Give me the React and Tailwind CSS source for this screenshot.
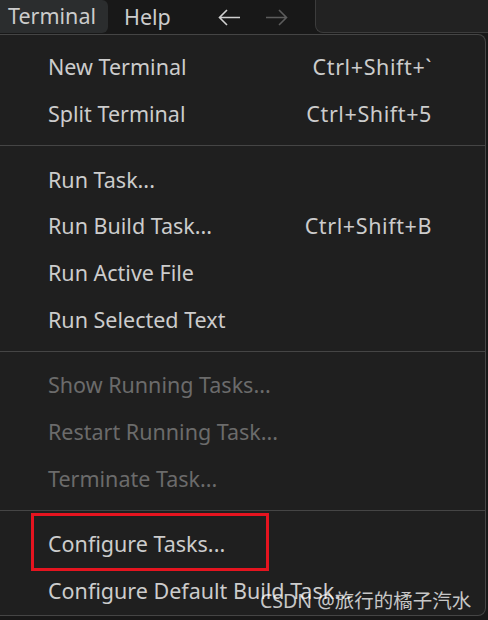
import React from 'react';

const groups = [
  [
    { label: 'New Terminal', keys: 'Ctrl+Shift+`' },
    { label: 'Split Terminal', keys: 'Ctrl+Shift+5' },
  ],
  [
    { label: 'Run Task...' },
    { label: 'Run Build Task...', keys: 'Ctrl+Shift+B' },
    { label: 'Run Active File' },
    { label: 'Run Selected Text' },
  ],
  [
    { label: 'Show Running Tasks...', disabled: true },
    { label: 'Restart Running Task...', disabled: true },
    { label: 'Terminate Task...', disabled: true },
  ],
  [
    { label: 'Configure Tasks...', marked: true },
    { label: 'Configure Default Build Task...' },
  ],
];

const Arrow = ({ flip, color }) => (
  <svg width="23" height="17" viewBox="0 0 23 17" fill="none" className={flip ? 'rotate-180' : ''}>
    <path d="M22 8.5H1.5M9 1L1.5 8.5 9 16" stroke={color} strokeWidth="1.6" />
  </svg>
);

const MenuItem = ({ item }) => (
  <div className="relative flex h-[46.7px] items-center justify-between pl-12 pr-[53px]">
    <span className={item.disabled ? 'text-[#6b6b6b]' : 'text-[#cccccc]'}>{item.label}</span>
    {item.keys && <span className="tracking-[0.6px] text-[#cccccc]">{item.keys}</span>}
    {item.marked && (
      <div className="absolute left-[31px] top-[-8px] h-[58px] w-[238px] border-[3px] border-[#e5141f]" />
    )}
  </div>
);

export default function App() {
  return (
    <div className="relative h-[620px] w-[488px] overflow-hidden bg-[#181818] font-['Noto_Sans',sans-serif] text-[21.5px]">
      <div className="flex h-[34px] items-center">
        <div className="flex h-[33px] w-[108px] items-center self-start rounded-r-md bg-[#2b2d2e] pl-2 text-[#cccccc]">
          Terminal
        </div>
        <div className="ml-4 text-[#cccccc]">Help</div>
        <div className="ml-[47px] flex items-center gap-[24px]">
          <Arrow color="#d0d0d0" />
          <Arrow flip color="#5c5c5c" />
        </div>
        <div className="ml-auto h-[33px] w-[173px] self-start rounded-bl-lg border border-t-0 border-r-0 border-[#3c3c3c] bg-[#222222]" />
      </div>

      <div className="mr-[2px] h-[582px] rounded-r-lg border border-l-0 border-[#454545] bg-[#1f1f1f] pt-[9px]">
        {groups.map((group, gi) => (
          <div key={gi}>
            {gi > 0 && <div className="mb-[10px] mt-2 h-px bg-[#454545]" />}
            {group.map((item) => (
              <MenuItem key={item.label} item={item} />
            ))}
          </div>
        ))}
      </div>

      <div className="absolute left-[260px] top-[586px] font-['Noto_Sans','Noto_Sans_CJK_SC',sans-serif] text-[19.5px] text-white/75">
        CSDN @旅行的橘子汽水
      </div>
    </div>
  );
}
